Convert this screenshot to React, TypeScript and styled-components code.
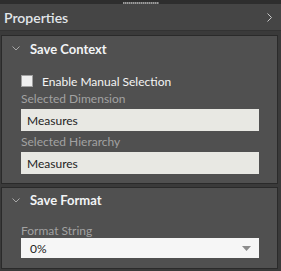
import React from "react";
import styled, { createGlobalStyle } from "styled-components";

const GlobalStyle = createGlobalStyle`
  html, body {
    margin: 0;
    padding: 0;
    background: #3b3b3b;
  }
  * {
    box-sizing: border-box;
  }
`;

const Pane = styled.div`
  width: 281px;
  height: 271px;
  display: flex;
  flex-direction: column;
  background: #3a3a3a;
  font-family: "Lato", "Open Sans", sans-serif;
  overflow: hidden;
`;

const TopStrip = styled.div`
  height: 4px;
  background: #2e2e2e;
  display: flex;
  justify-content: center;
  align-items: flex-end;
`;

const Grip = styled.div`
  width: 36px;
  height: 2px;
  background: repeating-linear-gradient(90deg, #9a9a9a 0 1px, #6a6a6a 1px 2px);
`;

const Header = styled.div`
  height: 27px;
  display: flex;
  align-items: center;
  justify-content: space-between;
  padding: 0 9px 0 4px;
  background: #454545;
  border-bottom: 1px solid #333;
`;

const HeaderTitle = styled.span`
  color: #e2e6ea;
  font-size: 14px;
  font-weight: 600;
`;

const Body = styled.div`
  flex: 1;
  display: flex;
  flex-direction: column;
  gap: 3px;
  padding: 4px 3px 0 1px;
`;

const Card = styled.section`
  background: #505050;
  border: 1px solid #2a2a2a;
`;

const CardHeader = styled.div<{ $h: number }>`
  height: ${(p) => p.$h}px;
  display: flex;
  align-items: center;
  gap: 10px;
  padding-left: 10px;
  color: #f2f4f6;
  font-size: 13px;
  font-weight: 700;
`;

const CardContent = styled.div<{ $top: number; $bottom: number }>`
  display: flex;
  flex-direction: column;
  padding: ${(p) => p.$top}px 18px ${(p) => p.$bottom}px 19px;
`;

const CheckRow = styled.label`
  height: 14px;
  display: flex;
  align-items: center;
  gap: 9px;
  color: #f4f4f4;
  font-size: 12px;
`;

const Box = styled.span`
  width: 12px;
  height: 12px;
  background: #efefef;
  border: 1px solid #a0a0a0;
`;

const FieldLabel = styled.div<{ $h: number }>`
  height: ${(p) => p.$h}px;
  display: flex;
  align-items: center;
  color: #a2a2a2;
  font-size: 12px;
`;

const TextField = styled.div`
  height: 22px;
  display: flex;
  align-items: center;
  padding-left: 6px;
  background: #e8e8e3;
  color: #1e1e1e;
  font-size: 12px;
`;

const Select = styled.div`
  height: 20px;
  display: flex;
  align-items: center;
  justify-content: space-between;
  padding: 0 8px 0 9px;
  background: #f6f6f6;
  color: #1e1e1e;
  font-size: 12px;
`;

const Chevron = ({ dir }: { dir: "down" | "right" }) =>
  dir === "down" ? (
    <svg width="8" height="5" viewBox="0 0 8 5">
      <path d="M0.5 0.5 L4 4 L7.5 0.5" fill="none" stroke="#a8a8a8" strokeWidth="1" />
    </svg>
  ) : (
    <svg width="5" height="9" viewBox="0 0 5 9">
      <path d="M0.5 0.5 L4.5 4.5 L0.5 8.5" fill="none" stroke="#c8c8c8" strokeWidth="1" />
    </svg>
  );

const Caret = () => (
  <svg width="9" height="5" viewBox="0 0 9 5">
    <path d="M0 0 H9 L4.5 5 Z" fill="#8c8c8c" />
  </svg>
);

export default function App() {
  return (
    <>
      <GlobalStyle />
      <Pane>
        <TopStrip>
          <Grip />
        </TopStrip>
        <Header>
          <HeaderTitle>Properties</HeaderTitle>
          <Chevron dir="right" />
        </Header>
        <Body>
          <Card>
            <CardHeader $h={25}>
              <Chevron dir="down" />
              Save Context
            </CardHeader>
            <CardContent $top={13} $bottom={9}>
              <CheckRow>
                <Box />
                Enable Manual Selection
              </CheckRow>
              <FieldLabel $h={21}>Selected Dimension</FieldLabel>
              <TextField>Measures</TextField>
              <FieldLabel $h={21}>Selected Hierarchy</FieldLabel>
              <TextField>Measures</TextField>
            </CardContent>
          </Card>
          <Card>
            <CardHeader $h={24}>
              <Chevron dir="down" />
              Save Format
            </CardHeader>
            <CardContent $top={10} $bottom={10}>
              <FieldLabel $h={16}>Format String</FieldLabel>
              <Select>
                0%
                <Caret />
              </Select>
            </CardContent>
          </Card>
        </Body>
      </Pane>
    </>
  );
}
